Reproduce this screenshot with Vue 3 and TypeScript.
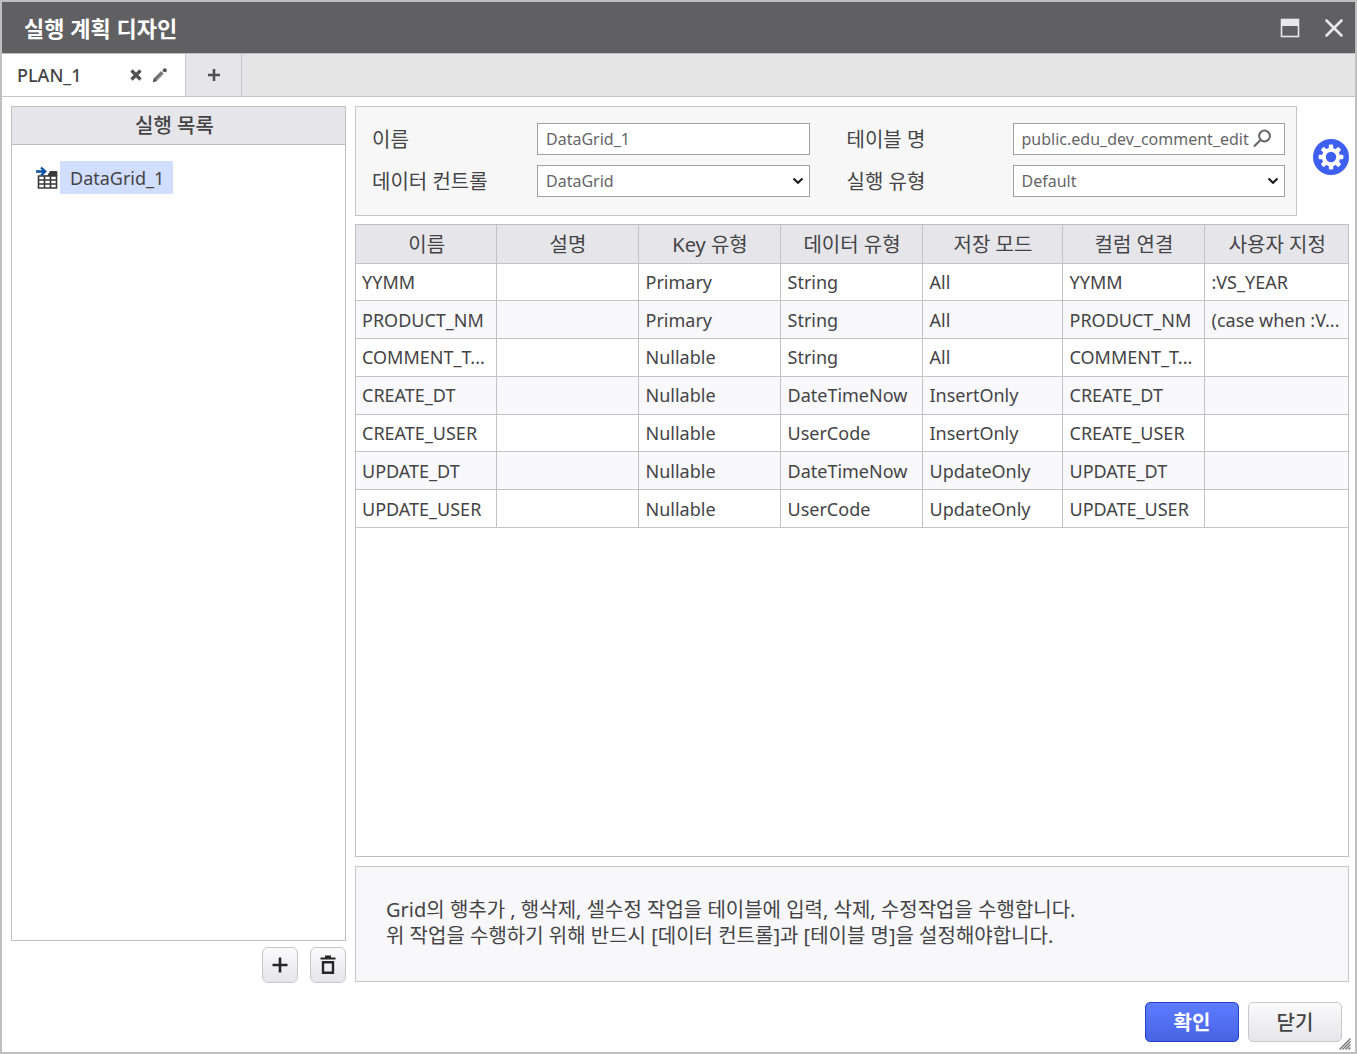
<script setup lang="ts">
import { ref } from 'vue'

interface Column {
  title: string
  width: number
}

const planName = ref('DataGrid_1')
const dataControl = ref('DataGrid')
const tableName = ref('public.edu_dev_comment_edit')
const runType = ref('Default')

const columns: Column[] = [
  { title: '이름', width: 140 },
  { title: '설명', width: 142 },
  { title: 'Key 유형', width: 142 },
  { title: '데이터 유형', width: 142 },
  { title: '저장 모드', width: 140 },
  { title: '컬럼 연결', width: 142 },
  { title: '사용자 지정', width: 144 },
]
const totalWidth = columns.reduce((sum, c) => sum + c.width, 0)

const rows: string[][] = [
  ['YYMM', '', 'Primary', 'String', 'All', 'YYMM', ':VS_YEAR'],
  ['PRODUCT_NM', '', 'Primary', 'String', 'All', 'PRODUCT_NM', '(case when :V...'],
  ['COMMENT_T...', '', 'Nullable', 'String', 'All', 'COMMENT_T...', ''],
  ['CREATE_DT', '', 'Nullable', 'DateTimeNow', 'InsertOnly', 'CREATE_DT', ''],
  ['CREATE_USER', '', 'Nullable', 'UserCode', 'InsertOnly', 'CREATE_USER', ''],
  ['UPDATE_DT', '', 'Nullable', 'DateTimeNow', 'UpdateOnly', 'UPDATE_DT', ''],
  ['UPDATE_USER', '', 'Nullable', 'UserCode', 'UpdateOnly', 'UPDATE_USER', ''],
]
</script>

<template>
  <div class="dialog" lang="ko">
    <header class="titlebar">
      <h1>실행 계획 디자인</h1>
      <div class="window-buttons">
        <button type="button" aria-label="최대화">
          <svg width="20" height="20" viewBox="0 0 20 20">
            <rect x="1.5" y="1.5" width="17" height="17" fill="none" stroke="#e8e8ea" stroke-width="1.6" />
            <rect x="1" y="1" width="18" height="7" fill="#e8e8ea" />
          </svg>
        </button>
        <button type="button" aria-label="닫기">
          <svg width="20" height="20" viewBox="0 0 20 20">
            <path d="M2.5 2.5l15 15M17.5 2.5l-15 15" stroke="#e8e8ea" stroke-width="2.6" stroke-linecap="round" />
          </svg>
        </button>
      </div>
    </header>

    <nav class="tabs">
      <div class="tab">
        <span class="tab-name">PLAN_1</span>
        <button type="button" aria-label="탭 닫기">
          <svg width="12" height="12" viewBox="0 0 12 12">
            <path d="M1.500 1.500l9 9M10.500 1.500l-9 9" stroke="#505054" stroke-width="3.2" />
          </svg>
        </button>
        <button type="button" aria-label="이름 변경">
          <svg width="16" height="16" viewBox="0 0 16 16">
            <path d="M0.800 15.200l1.200-4.200L9 4l2.800 2.800L4.800 14z" fill="#8a8a8e" />
            <path d="M0.800 15.200l1.200-4.200 2.800 2.900z" fill="#505054" />
            <path d="M3 12L10.300 5" stroke="#505054" stroke-width="1" />
            <circle cx="12.800" cy="3.200" r="2" fill="#505054" />
          </svg>
        </button>
      </div>
      <button type="button" class="tab-add" aria-label="탭 추가">
        <svg width="14" height="14" viewBox="0 0 14 14">
          <path d="M7 1v12M1 7h12" stroke="#505054" stroke-width="2.6" />
        </svg>
      </button>
    </nav>

    <main class="body">
      <aside class="side">
        <section class="list">
          <h2>실행 목록</h2>
          <ul>
            <li>
              <svg width="23" height="24" viewBox="0 0 23 24">
                <path d="M2.500 10h18v12h-18zM2.500 14h18M2.500 18h18M8.500 9v13M14.500 9v13" fill="none" stroke="#3a3a3c" stroke-width="1.6" />
                <path d="M14 5h6.300q1 0 1 1v4H11z" fill="#3a3a3c" />
                <path d="M0 5.500h8.500M5 1.500l4.200 4L5 9.500" fill="none" stroke="#0a50a0" stroke-width="2.4" />
              </svg>
              <button type="button" class="item">DataGrid_1</button>
            </li>
          </ul>
        </section>
        <div class="side-actions">
          <button type="button" aria-label="추가">
            <svg width="16" height="16" viewBox="0 0 16 16">
              <path d="M8 0.500v15M0.500 8h15" stroke="#262628" stroke-width="2.6" />
            </svg>
          </button>
          <button type="button" aria-label="삭제">
            <svg width="16" height="20" viewBox="0 0 16 20">
              <path d="M0.500 3.500h15M5 1.700h6" fill="none" stroke="#262628" stroke-width="2.2" />
              <path d="M3 7.200h10v10.500H3z" fill="none" stroke="#262628" stroke-width="2.4" />
            </svg>
          </button>
        </div>
      </aside>

      <div class="detail">
        <div class="settings">
          <form class="form" @submit.prevent>
            <label for="plan-name">이름</label>
            <input id="plan-name" v-model="planName" class="field" type="text" />
            <label for="table-name" class="second">테이블 명</label>
            <div class="field search">
              <input id="table-name" v-model="tableName" type="text" />
              <button type="button" aria-label="테이블 찾기">
                <svg width="20" height="20" viewBox="0 0 20 20">
                  <circle cx="12.500" cy="7" r="5.400" fill="none" stroke="#66666a" stroke-width="2" />
                  <path d="M8.500 11L2 17.500" stroke="#66666a" stroke-width="2.2" />
                </svg>
              </button>
            </div>
            <label for="data-control">데이터 컨트롤</label>
            <div class="select">
              <select id="data-control" v-model="dataControl" class="field">
                <option>DataGrid</option>
              </select>
              <svg width="12" height="8" viewBox="0 0 12 8">
                <path d="M1.500 1.500L6 5.800l4.500-4.300" fill="none" stroke="#1c1c1c" stroke-width="2.2" />
              </svg>
            </div>
            <label for="run-type" class="second">실행 유형</label>
            <div class="select">
              <select id="run-type" v-model="runType" class="field">
                <option>Default</option>
              </select>
              <svg width="12" height="8" viewBox="0 0 12 8">
                <path d="M1.500 1.500L6 5.800l4.500-4.300" fill="none" stroke="#1c1c1c" stroke-width="2.2" />
              </svg>
            </div>
          </form>
          <button type="button" class="gear" aria-label="설정">
            <svg width="36" height="36" viewBox="0 0 36 36">
              <circle cx="18" cy="18" r="18" fill="#3e5ff0" />
              <g fill="#fff">
                <rect v-for="n in 4" :key="n" x="15.800" y="5.600" width="4.400" height="24.800" rx="1.200" :transform="`rotate(${n * 45} 18 18)`" />
                <circle cx="18" cy="18" r="9.200" />
              </g>
              <circle cx="18" cy="18" r="5.200" fill="#3e5ff0" />
            </svg>
          </button>
        </div>

        <div class="grid">
          <table>
            <colgroup>
              <col v-for="c in columns" :key="c.title" :style="{ width: (c.width / totalWidth) * 100 + '%' }" />
            </colgroup>
            <thead>
              <tr>
                <th v-for="c in columns" :key="c.title" scope="col">{{ c.title }}</th>
              </tr>
            </thead>
            <tbody>
              <tr v-for="row in rows" :key="row[0]">
                <td v-for="(cell, i) in row" :key="i">{{ cell }}</td>
              </tr>
            </tbody>
          </table>
        </div>

        <p class="info">
          Grid의 행추가 , 행삭제, 셀수정 작업을 테이블에 입력, 삭제, 수정작업을 수행합니다.<br />
          위 작업을 수행하기 위해 반드시 [데이터 컨트롤]과 [테이블 명]을 설정해야합니다.
        </p>
      </div>
    </main>

    <footer class="footer">
      <button type="button" class="primary">확인</button>
      <button type="button">닫기</button>
      <svg class="grip" width="12" height="12" viewBox="0 0 12 12">
        <path d="M0.500 11.500l11-11M3.500 11.500l8-8M6.500 11.500l5-5M9.500 11.500l2-2" stroke="#77777a" stroke-width="1.4" />
      </svg>
    </footer>
  </div>
</template>

<style>
body {
  margin: 0;
  background: #fff;
}
</style>

<style scoped>
* {
  box-sizing: border-box;
}
.dialog {
  display: flex;
  flex-direction: column;
  min-height: 100vh;
  border: 2px solid #bfbfbf;
  background: #fff;
  color: #444446;
  font: 18px/26px "Noto Sans", "Noto Sans CJK KR", sans-serif;
}
button {
  display: flex;
  align-items: center;
  justify-content: center;
  padding: 0;
  border: 0;
  background: none;
  font: inherit;
  color: inherit;
}
svg {
  display: block;
}
.titlebar {
  display: flex;
  align-items: center;
  justify-content: space-between;
  height: 51px;
  padding: 0 11px 0 22px;
  background: #606062;
}
h1 {
  margin: 0;
  color: #fff;
  font-size: 22px;
  font-weight: 700;
}
.window-buttons {
  display: flex;
  gap: 24px;
}
.tabs {
  display: flex;
  height: 44px;
  border-top: 1px solid #bfbfc1;
  border-bottom: 1px solid #c6c6c8;
  background: #e5e5e5;
}
.tab {
  display: flex;
  align-items: center;
  gap: 10px;
  width: 184px;
  padding: 0 17px 0 15px;
  border-right: 1px solid #c6c6c8;
  background: #fff;
}
.tab-name {
  flex: 1;
  font-weight: 500;
}
.tab-add {
  width: 56px;
  border-right: 1px solid #c6c6c8;
  background: #e6e6ea;
}
.body {
  display: flex;
  flex: 1;
  gap: 9px;
  padding: 9px 6px 0 9px;
}
.side {
  display: flex;
  flex-direction: column;
  gap: 6px;
  width: 335px;
}
.list {
  flex: 1;
  border: 1px solid #bfbfc1;
}
h2 {
  height: 38px;
  margin: 0;
  padding-right: 8px;
  border-bottom: 1px solid #bfbfc1;
  background: #e6e6ea;
  font-size: 20px;
  font-weight: 500;
  line-height: 38px;
  text-align: center;
}
ul {
  margin: 0;
  padding: 16px 24px;
  list-style: none;
}
li {
  display: flex;
  align-items: center;
  gap: 1px;
}
.item {
  height: 33px;
  padding: 0 9px 0 10px;
  background: #d2deff;
}
.side-actions {
  display: flex;
  justify-content: flex-end;
  gap: 12px;
}
.side-actions button {
  width: 36px;
  height: 36px;
  border: 1px solid #c8c8ca;
  border-radius: 6px;
  background: linear-gradient(#fafafb, #e6e6ea);
}
.detail {
  display: flex;
  flex: 1;
  flex-direction: column;
  min-width: 0;
}
.settings {
  display: flex;
  align-items: flex-start;
  gap: 16px;
  margin-bottom: 8px;
}
.form {
  display: grid;
  flex: 1;
  grid-template-columns: 165px 1fr 203px 1fr;
  gap: 10px 0;
  padding: 16px 11px 18px 16px;
  border: 1px solid #c6c6c8;
  background: #f7f7f7;
}
.gear {
  margin-top: 33px;
}
label {
  font-size: 20px;
  line-height: 34px;
  height: 32px;
}
.second {
  padding-left: 37px;
}
.field {
  width: 100%;
  min-width: 0;
  height: 32px;
  padding: 0 8px;
  border: 1px solid #a0a0a2;
  border-radius: 0;
  background: #fff;
  color: #666668;
  font: 16px/24px "Noto Sans", "Noto Sans CJK KR", sans-serif;
}
.search {
  display: flex;
  align-items: center;
  padding-right: 12px;
}
.search input {
  flex: 1;
  min-width: 0;
  padding: 0;
  border: 0;
  background: none;
  color: inherit;
  font: inherit;
}
.select {
  display: grid;
  align-items: center;
}
.select > * {
  grid-area: 1 / 1;
}
.select svg {
  justify-self: end;
  margin-right: 6px;
  pointer-events: none;
}
select {
  appearance: none;
}
.grid {
  flex: 1;
  margin-bottom: 9px;
  border: 1px solid #bfbfc1;
}
table {
  width: 100%;
  height: 303px;
  border-collapse: collapse;
  table-layout: fixed;
}
th,
td {
  overflow: hidden;
  padding: 0 4px 0 7px;
  border-right: 1px solid #c3c3c5;
  border-bottom: 1px solid #c3c3c5;
  text-overflow: ellipsis;
  white-space: nowrap;
}
td:first-child {
  padding-left: 6px;
}
th:last-child,
td:last-child {
  border-right: 0;
}
th {
  height: 38px;
  padding: 2px 4px 0 6px;
  background: #e6e6ea;
  font-size: 20px;
  font-weight: 400;
}
td {
  height: 37px;
}
tbody tr:nth-child(even) {
  background: #f9f9fc;
}
.info {
  margin: 0 0 1px;
  padding: 30px 30px 32px;
  border: 1px solid #c6c6c8;
  background: #f8f8fb;
  font-size: 20px;
  line-height: 26px;
}
.footer {
  position: relative;
  display: flex;
  justify-content: flex-end;
  gap: 9px;
  padding: 19px 13px 10px;
}
.footer button {
  width: 94px;
  height: 40px;
  padding-top: 2px;
  border: 1px solid #c8c8ca;
  border-radius: 5px;
  background: linear-gradient(#fafafb, #e6e6ea);
  font-size: 20px;
  font-weight: 500;
}
.footer .primary {
  border-color: #2440c8;
  background: linear-gradient(#5c7cff, #4864e4);
  color: #fff;
  font-weight: 700;
}
.grip {
  position: absolute;
  right: 4px;
  bottom: 2px;
}
</style>
